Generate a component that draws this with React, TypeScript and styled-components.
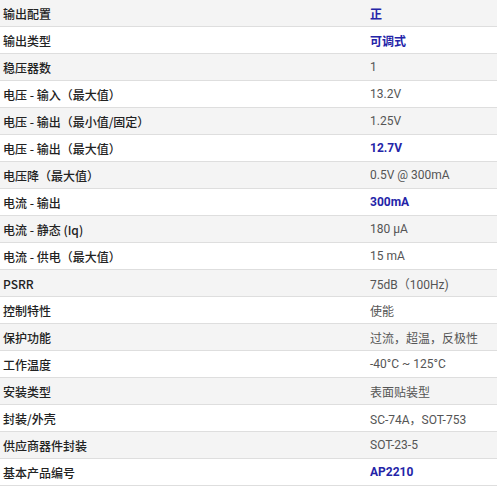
import React from "react";
import styled, { createGlobalStyle } from "styled-components";

const Global = createGlobalStyle`
  html, body { margin: 0; padding: 0; background: #fff; }
  body { font-family: Roboto, "Noto Sans CJK SC", sans-serif; }
`;

const Table = styled.div`
  width: 497px;
  display: flex;
  flex-direction: column;
`;

const Row = styled.div<{ $shade: boolean }>`
  display: grid;
  grid-template-columns: 367px 1fr;
  height: 26px;
  align-items: center;
  border-bottom: 1px solid #dedede;
  background: ${(p) => (p.$shade ? "#f4f4f4" : "#ffffff")};
`;

const Label = styled.div`
  padding-left: 3px;
  font-family: "Noto Sans CJK SC", "Noto Sans", sans-serif;
  font-size: 12px;
  font-weight: 500;
  color: #222;
  white-space: nowrap;
`;

const Value = styled.div<{ $link: boolean }>`
  padding-left: 3px;
  font-family: Roboto, "Noto Sans CJK SC", sans-serif;
  font-size: 12px;
  font-weight: ${(p) => (p.$link ? 700 : 400)};
  color: ${(p) => (p.$link ? "#2424a8" : "#555")};
  white-space: nowrap;
`;

const rows: [string, string, boolean][] = [
  ["输出配置", "正", true],
  ["输出类型", "可调式", true],
  ["稳压器数", "1", false],
  ["电压 - 输入（最大值）", "13.2V", false],
  ["电压 - 输出（最小值/固定）", "1.25V", false],
  ["电压 - 输出（最大值）", "12.7V", true],
  ["电压降（最大值）", "0.5V @ 300mA", false],
  ["电流 - 输出", "300mA", true],
  ["电流 - 静态 (Iq)", "180 µA", false],
  ["电流 - 供电（最大值）", "15 mA", false],
  ["PSRR", "75dB（100Hz)", false],
  ["控制特性", "使能", false],
  ["保护功能", "过流，超温，反极性", false],
  ["工作温度", "-40°C ~ 125°C", false],
  ["安装类型", "表面贴装型", false],
  ["封装/外壳", "SC-74A，SOT-753", false],
  ["供应商器件封装", "SOT-23-5", false],
  ["基本产品编号", "AP2210", true],
];

export default function App() {
  return (
    <>
      <Global />
      <Table>
        {rows.map(([l, v, link], i) => (
          <Row key={i} $shade={i % 2 === 0}>
            <Label>{l}</Label>
            <Value $link={link}>{v}</Value>
          </Row>
        ))}
      </Table>
    </>
  );
}
